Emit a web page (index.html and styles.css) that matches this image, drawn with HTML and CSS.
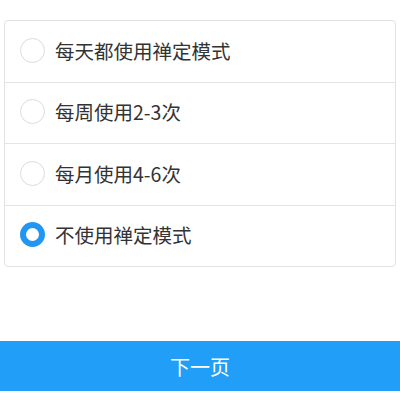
FILE: index.html
```html
<!DOCTYPE html>
<html lang="zh-CN">
<head>
<meta charset="utf-8">
<link rel="stylesheet" href="styles.css">
</head>
<body>
<div class="list">
  <div class="row"><span class="radio"></span><span class="label">每天都使用禅定模式</span></div>
  <div class="row"><span class="radio"></span><span class="label">每周使用2-3次</span></div>
  <div class="row"><span class="radio"></span><span class="label">每月使用4-6次</span></div>
  <div class="row"><span class="radio checked"></span><span class="label">不使用禅定模式</span></div>
</div>
<div class="next">下一页</div>
</body>
</html>
```

FILE: styles.css
```css
html, body {
  margin: 0;
  padding: 0;
  background: #ffffff;
  font-family: "Noto Sans CJK SC", "Noto Sans", sans-serif;
}
.list {
  margin: 20px 4px 0 4px;
  border: 1px solid #e2e2e2;
  border-radius: 4px;
  background: #fff;
}
.row {
  height: 58.5px;
  padding-bottom: 2px;
  display: flex;
  align-items: center;
  padding-left: 15px;
  border-bottom: 1px solid #e4e4e4;
}
.row:last-child {
  border-bottom: none;
}
.radio {
  box-sizing: border-box;
  width: 25px;
  height: 25px;
  border-radius: 50%;
  border: 1px solid #dcdcdc;
  margin-right: 10px;
  flex: none;
}
.radio.checked {
  border: 6.5px solid #2196f3;
}
.label {
  font-size: 19.5px;
  color: #333333;
  line-height: 1;
}
.next {
  margin-top: 74px;
  height: 50px;
  background: #219ef7;
  color: #ffffff;
  font-size: 20px;
  display: flex;
  align-items: center;
  justify-content: center;
}
```
